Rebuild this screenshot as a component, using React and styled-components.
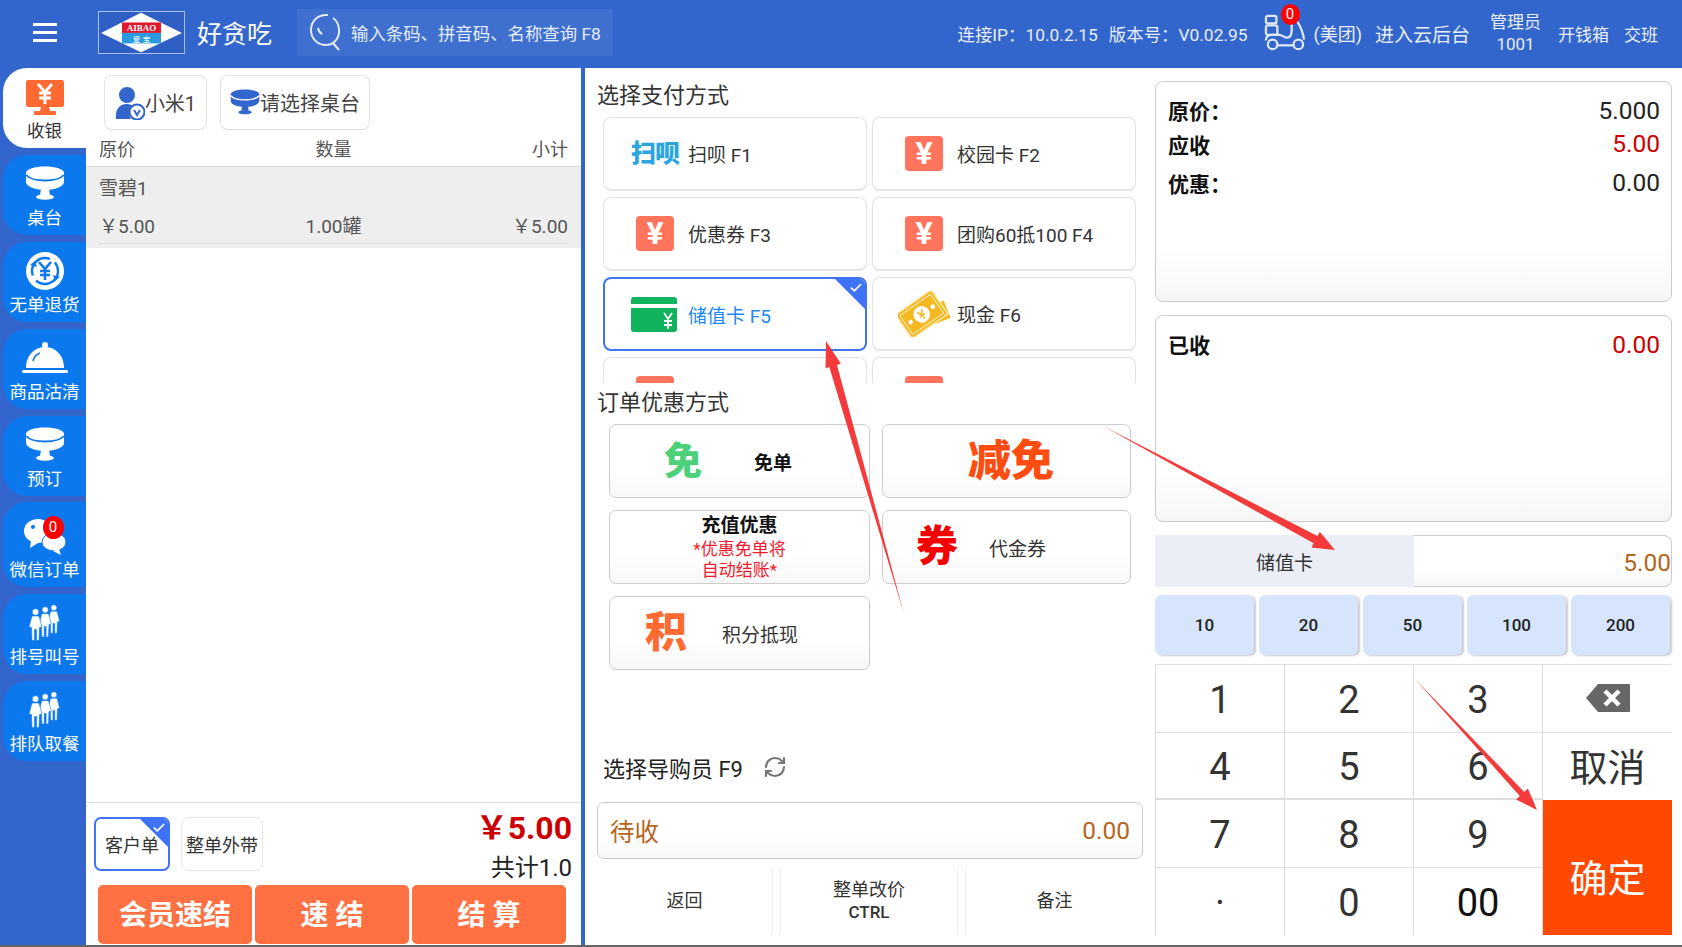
import React from 'react';
import styled, { createGlobalStyle } from 'styled-components';
import { RefreshCw, Check } from 'lucide-react';

const GlobalStyle = createGlobalStyle`
  html, body {
    margin: 0;
    padding: 0;
    background: #fff;
    overflow: hidden;
  }
  * { box-sizing: border-box; }
  body {
    font-family: Roboto, "Noto Sans CJK SC", sans-serif;
    color: #333;
  }
`;

const Page = styled.div`
  position: relative;
  width: 1682px;
  height: 947px;
  display: flex;
  flex-direction: column;
  overflow: hidden;
  border-bottom: 2px solid #666;
`;

/* ---------- header ---------- */
const Header = styled.div`
  height: 68px;
  flex: none;
  background: #3366cc;
  display: flex;
  align-items: center;
  color: #fff;
  padding: 0 24px 4px 0;
`;
const Burger = styled.div`
  width: 24px;
  margin-left: 33px;
  display: flex;
  flex-direction: column;
  gap: 5px;
  span { display: block; height: 3px; background: #fff; }
`;
const LogoBox = styled.div`
  width: 87px;
  height: 43px;
  margin-left: 41px;
  border: 1px solid #a9bfe8;
  svg { display: block; }
`;
const AppName = styled.div`
  font-size: 25px;
  margin-left: 12px;
`;
const SearchBox = styled.div`
  width: 316px;
  height: 47px;
  margin-left: 25px;
  background: #3f70d0;
  display: flex;
  align-items: center;
  padding-left: 10px;
  font-size: 17.4px;
  color: #e6edfa;
  white-space: nowrap;
  gap: 8px;
`;
const HeaderRight = styled.div`
  margin-left: auto;
  margin-top: 2px;
  display: flex;
  align-items: center;
  font-size: 17px;
  color: #e8effb;
  white-space: nowrap;
`;
const HeaderText = styled.div`
  margin-left: ${(p) => p.$gap || 0}px;
  font-size: ${(p) => p.$size || 17}px;
  line-height: ${(p) => p.$line || 'normal'};
  text-align: center;
`;
const Scooter = styled.div`
  position: relative;
  width: 52px;
  height: 44px;
  margin-left: 14px;
  margin-top: 2px;
  svg { display: block; }
`;
const RedBadge = styled.div`
  position: absolute;
  top: ${(p) => p.$top}px;
  left: ${(p) => p.$left}px;
  width: ${(p) => p.$size}px;
  height: ${(p) => p.$size + 2}px;
  border-radius: 50%;
  background: #f00;
  color: #fff;
  font-size: 15px;
  line-height: ${(p) => p.$size + 2}px;
  text-align: center;
`;

/* ---------- body ---------- */
const Body = styled.div`
  flex: 1;
  display: flex;
  min-height: 0;
`;
const Sidebar = styled.div`
  width: 86px;
  flex: none;
  background: #3366cc;
  padding-left: 3px;
  display: flex;
  flex-direction: column;
  gap: 7px;
`;
const NavItem = styled.div`
  height: ${(p) => (p.$tall ? 85 : 80)}px;
  margin-top: ${(p) => (p.$tall ? -1 : 0)}px;
  border-radius: 24px 0 0 24px;
  background: ${(p) => (p.$active ? '#fff' : '#0c78ee')};
  color: ${(p) => (p.$active ? '#333' : '#fff')};
  display: flex;
  flex-direction: column;
  align-items: center;
  justify-content: flex-end;
  padding-bottom: 6px;
  font-size: 17.5px;
  line-height: 22px;
`;
const NavIcon = styled.div`
  position: relative;
  height: 46px;
  width: 60px;
  display: flex;
  align-items: center;
  justify-content: center;
  svg { display: block; }
`;

/* ---------- order panel ---------- */
const OrderPanel = styled.div`
  width: 495px;
  flex: none;
  display: flex;
  flex-direction: column;
`;
const TagRow = styled.div`
  display: flex;
  gap: 13px;
  padding: 7px 0 0 18px;
`;
const TagButton = styled.div`
  height: 55px;
  width: ${(p) => p.$w}px;
  border: 1px solid #e3e3e3;
  border-bottom-color: #ddd;
  border-radius: 8px;
  display: flex;
  align-items: center;
  justify-content: center;
  font-size: 20px;
  color: #444;
  svg { flex: none; }
`;
const OrderHead = styled.div`
  height: 37px;
  display: grid;
  grid-template-columns: 1fr 1fr 1fr;
  align-items: center;
  padding: 0 13px;
  font-size: 18px;
  color: #555;
  border-bottom: 1px solid #ddd;
`;
const Cell = styled.div`
  text-align: ${(p) => p.$align || 'left'};
`;
const OrderRow = styled.div`
  height: 81px;
  background: #eeeeee;
  padding: 0 13px;
  font-size: 19px;
  color: #555;
`;
const RowName = styled.div`
  height: 39px;
  display: flex;
  align-items: center;
`;
const RowValues = styled.div`
  height: 38px;
  display: grid;
  grid-template-columns: 1fr 1fr 1fr;
  align-items: center;
  border-bottom: 1px solid #ddd;
`;
const OrderSpace = styled.div`
  flex: 1;
`;
const OrderFooter = styled.div`
  height: 143px;
  flex: none;
  border-top: 1px solid #ddd;
  padding: 0 13px;
`;
const FooterTop = styled.div`
  height: 82px;
  display: flex;
  align-items: flex-start;
  justify-content: space-between;
`;
const ChoiceRow = styled.div`
  display: flex;
  gap: 11px;
  margin-top: 14px;
  margin-left: -5px;
`;
const ChoiceButton = styled.div`
  position: relative;
  overflow: hidden;
  width: ${(p) => p.$w}px;
  height: 54px;
  border-radius: 7px;
  border: ${(p) => (p.$on ? '2px solid #3f73f5' : '1px solid #e6e6e6')};
  display: flex;
  align-items: center;
  justify-content: center;
  font-size: 18px;
  color: #333;
`;
const Corner = styled.div`
  position: absolute;
  top: 0;
  right: 0;
  width: 0;
  height: 0;
  border-top: ${(p) => p.$size}px solid #3f73f5;
  border-left: ${(p) => p.$size}px solid transparent;
  svg {
    position: absolute;
    top: -${(p) => p.$size - 2}px;
    right: 2px;
    color: #fff;
  }
`;
const Totals = styled.div`
  text-align: right;
  padding-top: 3px;
  margin-right: -4px;
`;
const TotalPrice = styled.div`
  font-size: 32px;
  line-height: 44px;
  font-weight: 700;
  color: #cc0000;
`;
const TotalCount = styled.div`
  font-size: 24px;
  line-height: 30px;
  color: #222;
  margin-top: 3px;
`;
const ActionRow = styled.div`
  display: grid;
  grid-template-columns: repeat(3, 154px);
  gap: 3px;
  margin: 0 0 0 -1px;
`;
const ActionButton = styled.div`
  height: 59px;
  padding-bottom: 3px;
  background: #ff7043;
  color: #fff;
  border-radius: 5px;
  font-size: 28px;
  font-weight: 700;
  display: flex;
  align-items: center;
  justify-content: center;
  white-space: pre;
`;

const BlueDivider = styled.div`
  width: 4px;
  flex: none;
  background: #3366cc;
`;

/* ---------- payment column ---------- */
const PayColumn = styled.div`
  width: 570px;
  flex: none;
  display: flex;
  flex-direction: column;
  padding: 0 12px;
`;
const SectionTitle = styled.div`
  font-size: 22px;
  line-height: 30px;
  color: #333;
  height: ${(p) => p.$h}px;
  padding-top: ${(p) => p.$top}px;
`;
const PayClip = styled.div`
  height: 266px;
  overflow: hidden;
  padding-left: 6px;
`;
const PayGrid = styled.div`
  display: grid;
  grid-template-columns: 264px 264px;
  grid-auto-rows: 74px;
  gap: 6px 5px;
`;
const PayCard = styled.div`
  position: relative;
  overflow: hidden;
  display: flex;
  align-items: center;
  background: #fff;
  border-radius: 8px;
  border: ${(p) => (p.$on ? '2px solid #3f73f5' : '1px solid #e4e4e4')};
  border-bottom-width: 2px;
  font-size: 19px;
  color: ${(p) => (p.$on ? '#1e88f5' : '#333')};
`;
const PayIcon = styled.div`
  width: ${(p) => (p.$on ? 83 : 84)}px;
  flex: none;
  padding-left: ${(p) => (p.$on ? 15 : 18)}px;
  display: flex;
  justify-content: center;
  align-items: center;
  svg { display: block; }
`;
const YenTile = styled.div`
  width: 38px;
  height: 35px;
  border-radius: 4px;
  background: #ff745c;
  color: #fff;
  font-size: 32px;
  font-weight: 700;
  line-height: 35px;
  text-align: center;
`;
const ScanLogo = styled.div`
  font-size: 25px;
  font-weight: 900;
  line-height: 30px;
  letter-spacing: -1px;
  color: #2aa5e0;
`;
const DiscountGrid = styled.div`
  display: grid;
  grid-template-columns: 261px 249px;
  grid-auto-rows: 74px;
  gap: 12px;
  padding-left: 12px;
`;
const DiscountButton = styled.div`
  display: flex;
  align-items: center;
  justify-content: ${(p) => (p.$center ? 'center' : 'flex-start')};
  flex-direction: ${(p) => (p.$stack ? 'column' : 'row')};
  padding-left: ${(p) => p.$pad || 0}px;
  border: 1px solid #ccc;
  border-radius: 7px;
  background: linear-gradient(#fff 60%, #f7f7f7);
  font-size: 19px;
  color: #333;
`;
const BigGlyph = styled.div`
  font-size: ${(p) => p.$size}px;
  font-weight: 900;
  color: ${(p) => p.$color};
  line-height: 1;
  width: ${(p) => (p.$w ? `${p.$w}px` : 'auto')};
`;
const DiscountLabel = styled.div`
  font-weight: ${(p) => (p.$bold ? 700 : 400)};
  color: ${(p) => (p.$bold ? '#111' : '#333')};
`;
const RechargeTitle = styled.div`
  font-weight: 700;
  color: #111;
  line-height: 26px;
`;
const RechargeNote = styled.div`
  font-size: 17px;
  line-height: 21px;
  color: #f41a2c;
  text-align: center;
`;
const GuideRow = styled.div`
  margin-top: auto;
  height: 34px;
  display: flex;
  align-items: center;
  gap: 20px;
  padding-left: 6px;
  font-size: 22px;
  color: #222;
  svg { color: #777; }
`;
const WaitBox = styled.div`
  height: 57px;
  margin-top: 18px;
  border: 1px solid #ccc;
  border-radius: 7px;
  background: linear-gradient(#fff 60%, #f8f8f8);
  display: flex;
  align-items: center;
  justify-content: space-between;
  padding: 0 12px;
  font-size: 24.5px;
  color: #b5651d;
`;
const BottomActions = styled.div`
  height: 66px;
  margin: 9px 0 11px;
  display: grid;
  grid-template-columns: 175px 9px 176px 9px 177px;
`;
const BottomAction = styled.div`
  display: flex;
  flex-direction: column;
  align-items: center;
  justify-content: center;
  font-size: 18px;
  line-height: 22px;
  color: #333;
`;
const ActionGap = styled.div`
  border-left: 1px solid #eee;
  border-right: 1px solid #eee;
`;
const StrongCtrl = styled.span`
  font-weight: 500;
  font-size: 17px;
`;

/* ---------- settle column ---------- */
const SettleColumn = styled.div`
  flex: 1;
  display: flex;
  flex-direction: column;
  padding: 13px 10px 0 0;
`;
const AmountBox = styled.div`
  height: ${(p) => p.$h}px;
  margin-bottom: 13px;
  border: 1px solid #ccc;
  border-radius: 8px;
  background: linear-gradient(#fff 75%, #f6f6f6);
  padding: 11px 11px 0 12px;
`;
const AmountRow = styled.div`
  display: flex;
  align-items: center;
  justify-content: space-between;
  height: ${(p) => p.$h}px;
  font-size: 21px;
  font-weight: 700;
  color: #111;
`;
const AmountValue = styled.span`
  font-size: 24.5px;
  font-weight: 400;
  color: ${(p) => p.$color || '#222'};
`;
const TenderRow = styled.div`
  height: 52px;
  display: flex;
`;
const TenderLabel = styled.div`
  width: 259px;
  background: #ebeef6;
  display: flex;
  align-items: center;
  justify-content: center;
  font-size: 19px;
  color: #333;
`;
const TenderValue = styled.div`
  flex: 1;
  border: 1px solid #ccc;
  border-left: 0;
  border-radius: 0 8px 8px 0;
  background: linear-gradient(#fff 70%, #f6f6f6);
  display: flex;
  align-items: center;
  justify-content: flex-end;
  padding-top: 2px;
  font-size: 24.5px;
  color: #b5651d;
`;
const QuickRow = styled.div`
  display: grid;
  grid-template-columns: repeat(5, 99px);
  gap: 5px;
  margin-top: 8px;
  height: 60px;
`;
const QuickButton = styled.div`
  background: #d6e5fc;
  border-radius: 6px;
  box-shadow: 2px 1px 2px #ccc;
  display: flex;
  align-items: center;
  justify-content: center;
  font-size: 17px;
  font-weight: 500;
  color: #222;
`;
const Keypad = styled.div`
  margin-top: 9px;
  width: 516px;
  height: 271px;
  display: grid;
  grid-template-columns: repeat(4, 129px);
  grid-template-rows: repeat(4, 1fr);
  border-top: 1px solid #ddd;
  border-left: 1px solid #ddd;
`;
const Key = styled.div`
  display: flex;
  align-items: center;
  justify-content: center;
  padding-top: ${(p) => p.$drop || 0}px;
  padding-bottom: ${(p) => p.$lift || 0}px;
  font-size: ${(p) => p.$size || 38}px;
  color: ${(p) => p.$color || '#333'};
  border-right: ${(p) => (p.$last ? 0 : '1px solid #ddd')};
  border-bottom: ${(p) => (p.$bottom ? 0 : '1px solid #ddd')};
  border-bottom-width: ${(p) => (p.$thick ? 2 : 1)}px;
`;
const ConfirmKey = styled.div`
  grid-column: 4;
  grid-row: 3 / span 2;
  background: #ff4800;
  color: #fff;
  font-size: 38px;
  display: flex;
  align-items: center;
  justify-content: center;
  padding-top: 15px;
`;
const ArrowLayer = styled.svg`
  position: absolute;
  left: 0;
  top: 0;
  pointer-events: none;
`;

/* ---------- drawn icons ---------- */
const TableIcon = ({ color = '#fff', w = 40, plate = '#0c78ee' }) => (
  <svg width={w} height={w * 0.9} viewBox="0 0 40 36">
    <path d="M1 7c0-4 9-6.500 19-6.500S39 3 39 7v9c0 4-8 8-19 8S1 20 1 16z" fill={color} />
    <path d="M1.200 9c3 3.500 10 5.500 18.800 5.500S35.800 12.500 38.800 9" fill="none" stroke={plate} strokeWidth="1.800" />
    <path d="M16 23h8l1 6h-10z" fill={color} />
    <ellipse cx="20" cy="31" rx="9" ry="2.800" fill={color} />
  </svg>
);

const CashierIcon = () => (
  <svg width="40" height="37" viewBox="0 0 40 37">
    <rect x="1" y="1" width="38" height="27" rx="2" fill="#ff6a33" />
    <path d="M13 5l7 8 7-8M20 13v12M14 14h12M14 19h12" fill="none" stroke="#fff" strokeWidth="2.800" />
    <path d="M16 28h8l1 4h-10z" fill="#ff6a33" />
    <rect x="9" y="32" width="22" height="4" rx="1" fill="#ff6a33" />
  </svg>
);

const RefundIcon = () => (
  <svg width="40" height="40" viewBox="0 0 40 40">
    <circle cx="20" cy="20" r="19" fill="#fff" />
    <circle cx="20" cy="20" r="13" fill="none" stroke="#0c78ee" strokeWidth="2.400" strokeDasharray="30 6" />
    <path d="M5 14l5-4 2 6zM35 26l-5 4-2-6z" fill="#0c78ee" />
    <path d="M14 11l6 7 6-7M20 18v11M15 20h10M15 24h10" fill="none" stroke="#0c78ee" strokeWidth="2.600" />
  </svg>
);

const ClocheIcon = () => (
  <svg width="46" height="34" viewBox="0 0 46 34">
    <circle cx="23" cy="4" r="3" fill="#fff" />
    <path d="M4 27C4 15 12 6 23 6s19 9 19 21z" fill="#fff" />
    <path d="M11 20c1-4 4-7 7-8" stroke="#0c78ee" strokeWidth="1.600" fill="none" />
    <rect x="0" y="29" width="46" height="3" rx="1.500" fill="#fff" />
  </svg>
);

const WechatIcon = () => (
  <svg width="44" height="38" viewBox="0 0 44 38">
    <ellipse cx="15" cy="14" rx="14" ry="12" fill="#fff" />
    <path d="M8 24l-1 7 8-5z" fill="#fff" />
    <circle cx="10" cy="10" r="2" fill="#0c78ee" />
    <ellipse cx="31" cy="25" rx="12" ry="9" fill="#fff" stroke="#0c78ee" strokeWidth="1" />
    <path d="M36 32l2 6-8-4z" fill="#fff" />
  </svg>
);

const PersonShape = ({ x, y, s = 1 }) => (
  <g transform={`translate(${x} ${y}) scale(${s})`}>
    <circle cx="6.500" cy="3" r="3.200" fill="#fff" stroke="#0c78ee" strokeWidth="0.500" />
    <path d="M3 7h7l3 11-2.500.5-.5 13H7.500v-11h-2v11H3l-.5-13L0 18z" fill="#fff" stroke="#0c78ee" strokeWidth="0.600" />
  </g>
);

const QueueIcon = () => (
  <svg width="32" height="36" viewBox="0 0 32 36">
    <PersonShape x={19} y={0} s={0.9} />
    <PersonShape x={10} y={2} s={0.95} />
    <PersonShape x={0} y={4} />
  </svg>
);

const UserIcon = () => (
  <svg width="30" height="34" viewBox="0 0 30 34">
    <circle cx="12" cy="9" r="8" fill="#3366cc" />
    <path d="M1 33c-1-9 3-15 11-15 3 0 5 1 7 2-4 2-6 8-3 13z" fill="#3366cc" />
    <circle cx="22" cy="26" r="7.500" fill="#fff" stroke="#3366cc" strokeWidth="2" />
    <path d="M19 24l3 5 3-5" fill="none" stroke="#3366cc" strokeWidth="2" />
  </svg>
);

const LogoMark = () => (
  <svg width="85" height="41" viewBox="0 0 85 47" preserveAspectRatio="none">
    <rect width="85" height="47" fill="#2f5fc4" />
    <path d="M2 24L42 1l41 23-41 22z" fill="#fff" />
    <rect x="23" y="12" width="39" height="12" fill="#e0192e" />
    <rect x="23" y="24" width="39" height="12" fill="#2a9ae0" />
    <text x="42.500" y="22" fontSize="9" fontWeight="700" fill="#fff" textAnchor="middle" fontFamily="Liberation Serif, serif">AIBAO</text>
    <text x="42.500" y="34" fontSize="8" fill="#fff" textAnchor="middle">爱 宝</text>
  </svg>
);

const SearchGlyph = () => (
  <svg width="36" height="44" viewBox="0 0 34 44" fill="none" stroke="#e6edfa" strokeWidth="2">
    <path d="M20 5C10 4 3 11 3 20s7 15 15 15 14-7 13-16c-.5-5-3-9-6-11" />
    <path d="M25 33l6 7" />
    <path d="M10 18c.5 3 2 5 4 6" />
  </svg>
);

const ScooterIcon = () => (
  <svg width="46" height="40" viewBox="0 0 46 42" fill="none" stroke="#dde7f8" strokeWidth="2.400">
    <rect x="3" y="4" width="11" height="8" rx="2" />
    <rect x="3" y="14" width="12" height="10" rx="2" />
    <path d="M3 30c0-4 2-6 6-6h8c3 0 5 3 8 3 4 0 5-4 5-8V5h8" />
    <path d="M36 10c3 5 6 11 7 19" />
    <circle cx="10" cy="34" r="5" />
    <circle cx="37" cy="34" r="5" />
    <path d="M15 35h17" />
  </svg>
);

const CardIcon = () => (
  <svg width="46" height="35" viewBox="0 0 46 35">
    <rect width="46" height="35" rx="3" fill="#11b35f" />
    <rect y="7" width="46" height="4" fill="#fff" />
    <path d="M33 16l4 6 4-6M37 22v10M33 24h8M33 28h8" fill="none" stroke="#fff" strokeWidth="1.800" />
  </svg>
);

const CashIcon = () => (
  <svg width="52" height="46" viewBox="0 0 50 44">
    <g transform="rotate(-35 25 22)">
      <rect x="9" y="17" width="38" height="19" rx="1" transform="rotate(14 28 26)" fill="#f6b81f" stroke="#fff" strokeWidth="1" />
      <rect x="2" y="7" width="42" height="28" rx="1" fill="#f6b81f" stroke="#ffe9a8" strokeWidth="1.500" />
      <rect x="5" y="10" width="36" height="22" fill="none" stroke="#fff" strokeWidth="0.800" />
      <circle cx="23" cy="21" r="8" fill="#fff" />
      <path d="M20 17l3 4 3-4M23 21v5M20 22h6" fill="none" stroke="#f6b81f" strokeWidth="1.500" />
      <circle cx="10" cy="21" r="2.200" fill="#fff" />
      <circle cx="36" cy="21" r="2.200" fill="#fff" />
    </g>
  </svg>
);

const BackspaceIcon = () => (
  <svg width="46" height="30" viewBox="0 0 46 30">
    <path d="M13 1h31a1 1 0 0 1 1 1v26a1 1 0 0 1-1 1H13L1 15z" fill="#666" />
    <path d="M20 8l14 14M34 8L20 22" stroke="#fff" strokeWidth="4.500" />
  </svg>
);

// tapered annotation arrow, tail is a point and it widens toward the head
const arrowPoints = ([x1, y1], [x2, y2], headLen, headHalf, neckHalf) => {
  const len = Math.hypot(x2 - x1, y2 - y1);
  const ux = (x2 - x1) / len;
  const uy = (y2 - y1) / len;
  const nx = -uy;
  const ny = ux;
  const bx = x2 - ux * headLen;
  const by = y2 - uy * headLen;
  const pt = (x, y) => `${x.toFixed(1)},${y.toFixed(1)}`;
  return [
    pt(x1, y1),
    pt(bx + nx * neckHalf, by + ny * neckHalf),
    pt(bx + nx * headHalf, by + ny * headHalf),
    pt(x2, y2),
    pt(bx - nx * headHalf, by - ny * headHalf),
    pt(bx - nx * neckHalf, by - ny * neckHalf),
  ].join(' ');
};

const navItems = [
  { label: '桌台', icon: <TableIcon /> },
  { label: '无单退货', icon: <RefundIcon /> },
  { label: '商品沽清', icon: <ClocheIcon /> },
  { label: '预订', icon: <TableIcon /> },
  { label: '微信订单', icon: <WechatIcon />, badge: true, tall: true },
  { label: '排号叫号', icon: <QueueIcon /> },
  { label: '排队取餐', icon: <QueueIcon /> },
];

const keys = [
  ['1', '2', '3'],
  ['4', '5', '6'],
  ['7', '8', '9'],
  ['·', '0', '00'],
];

const App = () => (
  <Page>
    <GlobalStyle />
    <Header>
      <Burger><span /><span /><span /></Burger>
      <LogoBox><LogoMark /></LogoBox>
      <AppName>好贪吃</AppName>
      <SearchBox>
        <SearchGlyph />
        输入条码、拼音码、名称查询 F8
      </SearchBox>
      <HeaderRight>
        <HeaderText $size={17.4}>连接IP：10.0.2.15</HeaderText>
        <HeaderText $gap={11} $size={17.4}>版本号：V0.02.95</HeaderText>
        <Scooter>
          <ScooterIcon />
          <RedBadge $top={-8} $left={19} $size={19}>0</RedBadge>
        </Scooter>
        <HeaderText $size={18}>(美团)</HeaderText>
        <HeaderText $gap={13} $size={19}>进入云后台</HeaderText>
        <HeaderText $gap={20} $line="22px">管理员<br />1001</HeaderText>
        <HeaderText $gap={17}>开钱箱</HeaderText>
        <HeaderText $gap={15}>交班</HeaderText>
      </HeaderRight>
    </Header>
    <Body>
      <Sidebar>
        <NavItem $active>
          <NavIcon><CashierIcon /></NavIcon>
          收银
        </NavItem>
        {navItems.map((item) => (
          <NavItem key={item.label} $tall={item.tall}>
            <NavIcon>
              {item.icon}
              {item.badge && <RedBadge $top={3} $left={28} $size={21}>0</RedBadge>}
            </NavIcon>
            {item.label}
          </NavItem>
        ))}
      </Sidebar>

      <OrderPanel>
        <TagRow>
          <TagButton $w={103}><UserIcon />小米1</TagButton>
          <TagButton $w={150}><TableIcon color="#3366cc" w={30} plate="#fff" />请选择桌台</TagButton>
        </TagRow>
        <OrderHead>
          <Cell>原价</Cell>
          <Cell $align="center">数量</Cell>
          <Cell $align="right">小计</Cell>
        </OrderHead>
        <OrderRow>
          <RowName>雪碧1</RowName>
          <RowValues>
            <Cell>￥5.00</Cell>
            <Cell $align="center">1.00罐</Cell>
            <Cell $align="right">￥5.00</Cell>
          </RowValues>
        </OrderRow>
        <OrderSpace />
        <OrderFooter>
          <FooterTop>
            <ChoiceRow>
              <ChoiceButton $w={76} $on>
                客户单
                <Corner $size={28}><Check size={14} strokeWidth={3} /></Corner>
              </ChoiceButton>
              <ChoiceButton $w={82}>整单外带</ChoiceButton>
            </ChoiceRow>
            <Totals>
              <TotalPrice>￥5.00</TotalPrice>
              <TotalCount>共计1.0</TotalCount>
            </Totals>
          </FooterTop>
          <ActionRow>
            <ActionButton>会员速结</ActionButton>
            <ActionButton>速 结</ActionButton>
            <ActionButton>结 算</ActionButton>
          </ActionRow>
        </OrderFooter>
      </OrderPanel>
      <BlueDivider />

      <PayColumn>
        <SectionTitle $h={49} $top={13}>选择支付方式</SectionTitle>
        <PayClip>
          <PayGrid>
            <PayCard><PayIcon><ScanLogo>扫呗</ScanLogo></PayIcon>扫呗 F1</PayCard>
            <PayCard><PayIcon><YenTile>¥</YenTile></PayIcon>校园卡 F2</PayCard>
            <PayCard><PayIcon><YenTile>¥</YenTile></PayIcon>优惠券 F3</PayCard>
            <PayCard><PayIcon><YenTile>¥</YenTile></PayIcon>团购60抵100 F4</PayCard>
            <PayCard $on>
              <PayIcon $on><CardIcon /></PayIcon>储值卡 F5
              <Corner $size={30}><Check size={14} strokeWidth={3} /></Corner>
            </PayCard>
            <PayCard><PayIcon><CashIcon /></PayIcon>现金 F6</PayCard>
            <PayCard><PayIcon><YenTile /></PayIcon></PayCard>
            <PayCard><PayIcon><YenTile /></PayIcon></PayCard>
          </PayGrid>
        </PayClip>
        <SectionTitle $h={41} $top={5}>订单优惠方式</SectionTitle>
        <DiscountGrid>
          <DiscountButton $pad={54}>
            <BigGlyph $size={38} $color="#4cd07a" $w={90}>免</BigGlyph>
            <DiscountLabel $bold>免单</DiscountLabel>
          </DiscountButton>
          <DiscountButton $center $pad={9}>
            <BigGlyph $size={43} $color="#ff4d0f">减免</BigGlyph>
          </DiscountButton>
          <DiscountButton $center $stack>
            <RechargeTitle>充值优惠</RechargeTitle>
            <RechargeNote>*优惠免单将<br />自动结账*</RechargeNote>
          </DiscountButton>
          <DiscountButton $pad={33}>
            <BigGlyph $size={42} $color="#f50000" $w={73}>券</BigGlyph>
            代金券
          </DiscountButton>
          <DiscountButton $pad={35}>
            <BigGlyph $size={42} $color="#ff6a30" $w={77}>积</BigGlyph>
            积分抵现
          </DiscountButton>
        </DiscountGrid>
        <GuideRow>
          选择导购员 F9
          <RefreshCw size={24} strokeWidth={2.2} />
        </GuideRow>
        <WaitBox>
          <span>待收</span>
          <span>0.00</span>
        </WaitBox>
        <BottomActions>
          <BottomAction>返回</BottomAction>
          <ActionGap />
          <BottomAction>整单改价<StrongCtrl>CTRL</StrongCtrl></BottomAction>
          <ActionGap />
          <BottomAction>备注</BottomAction>
        </BottomActions>
      </PayColumn>

      <SettleColumn>
        <AmountBox $h={221}>
          <AmountRow $h={34}>原价：<AmountValue>5.000</AmountValue></AmountRow>
          <AmountRow $h={33}>应收<AmountValue $color="#cc0000">5.00</AmountValue></AmountRow>
          <AmountRow $h={45}>优惠：<AmountValue>0.00</AmountValue></AmountRow>
        </AmountBox>
        <AmountBox $h={207}>
          <AmountRow $h={34}>已收<AmountValue $color="#cc0000">0.00</AmountValue></AmountRow>
        </AmountBox>
        <TenderRow>
          <TenderLabel>储值卡</TenderLabel>
          <TenderValue>5.00</TenderValue>
        </TenderRow>
        <QuickRow>
          {['10', '20', '50', '100', '200'].map((v) => (
            <QuickButton key={v}>{v}</QuickButton>
          ))}
        </QuickRow>
        <Keypad>
          {keys.map((row, r) => (
            <React.Fragment key={r}>
              {row.map((k) => (
                <Key key={k} $drop={4} $bottom={r === 3} $thick={r === 1} $color={k === '00' ? '#111' : '#333'}>{k}</Key>
              ))}
              {r === 0 && <Key $last><BackspaceIcon /></Key>}
              {r === 1 && <Key $last $bottom $lift={4} $size={38}>取消</Key>}
              {r === 2 && <ConfirmKey>确定</ConfirmKey>}
            </React.Fragment>
          ))}
        </Keypad>
      </SettleColumn>
    </Body>

    <ArrowLayer width="1682" height="947" viewBox="0 0 1682 947">
      <polygon fill="#f43a3a" points={arrowPoints([904, 614], [826, 341], 26, 8, 4)} />
      <polygon fill="#f43a3a" points={arrowPoints([1103, 426], [1335, 550], 22, 9, 4)} />
      <polygon fill="#f43a3a" points={arrowPoints([1414, 678], [1537, 810], 22, 8, 3)} />
    </ArrowLayer>
  </Page>
);

export default App;
